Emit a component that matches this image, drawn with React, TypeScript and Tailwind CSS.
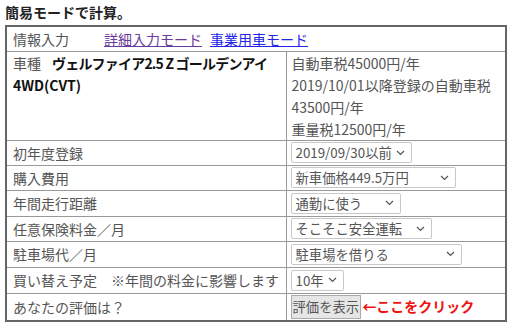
import React from 'react';

// select look-alike: native <select> draws differently in every browser
function FakeSelect({ label, width }: { label: string; width: string }) {
  return (
    <div
      className={`${width} h-[21px] flex items-center justify-between border border-[#c8c8c8] rounded-[2px] bg-white pl-1 pr-1.5 text-[13.33px] text-[#555]`}
    >
      <span className="whitespace-nowrap leading-[19px]">{label}</span>
      <svg width="9" height="6" viewBox="0 0 9 6" className="ml-1 shrink-0">
        <path d="M1 1l3.5 3.5L8 1" fill="none" stroke="#555" strokeWidth="1.2" />
      </svg>
    </div>
  );
}

const rows = [
  { label: '初年度登録', value: '2019/09/30以前', width: 'min-w-[114px]', h: 'h-[25px]' },
  { label: '購入費用', value: '新車価格449.5万円', width: 'min-w-[165px]', h: 'h-[25px]' },
  { label: '年間走行距離', value: '通勤に使う', width: 'min-w-[110px]', h: 'h-[26px]' },
  { label: '任意保険料金／月', value: 'そこそこ安全運転', width: 'min-w-[141px]', h: 'h-[25px]' },
  { label: '駐車場代／月', value: '駐車場を借りる', width: 'min-w-[171px]', h: 'h-[26px]' },
  { label: '買い替え予定　※年間の料金に影響します', value: '10年', width: 'min-w-[49px]', h: 'h-[26px]' },
];

export default function App() {
  return (
    <div
      className="w-[512px] h-[324px] bg-white text-[14px] text-[#555] overflow-hidden"
      style={{ fontFamily: '"Noto Sans CJK JP", "Noto Sans", sans-serif' }}
    >
      <h1 className="h-[25px] pl-[5px] leading-[25px] font-bold text-[14px] text-[#222]">簡易モードで計算。</h1>

      <table className="ml-[5px] w-[502px] border-collapse border-2 border-[#666]">
        <tbody>
          <tr className="h-[25px]">
            <td colSpan={2} className="border border-[#999] px-[6px] leading-[22px]">
              <span>情報入力</span>
              <a href="#" className="ml-[35px] underline text-[#6a3b9c]">詳細入力モード</a>
              <a href="#" className="ml-[8px] underline text-[#2323e8]">事業用車モード</a>
            </td>
          </tr>

          <tr className="h-[88px]">
            <td className="w-[280px] border border-[#999] px-[6px] align-top leading-[22px] whitespace-nowrap">
              <span>車種</span>
              <span className="ml-[11px] font-bold text-[#111] tracking-[-0.8px]">
                ヴェルファイア2.5 Z ゴールデンアイ
              </span>
              <br />
              <span className="font-bold text-[#111]">4WD(CVT)</span>
            </td>
            <td className="border border-[#999] pl-[5px] align-top leading-[22px] whitespace-nowrap">
              自動車税45000円/年
              <br />
              2019/10/01以降登録の自動車税
              <br />
              43500円/年
              <br />
              重量税12500円/年
            </td>
          </tr>

          {rows.map((r) => (
            <tr key={r.label} className={r.h}>
              <td className="border border-[#999] px-[6px] py-0 leading-[22px] whitespace-nowrap">{r.label}</td>
              <td className="border border-[#999] pl-[4px] py-0">
                <div className="flex">
                  <FakeSelect label={r.value} width={r.width} />
                </div>
              </td>
            </tr>
          ))}

          <tr className="h-[28px]">
            <td className="border border-[#999] px-[6px] leading-[22px]">あなたの評価は？</td>
            <td className="border border-[#999] pl-[4px] py-0">
              <div className="flex items-center">
                <button className="h-[24px] px-[1px] border border-[#aaa] bg-[#e6e6e6] text-[13.33px] text-[#555] leading-[20px]">
                  評価を表示
                </button>
                <span className="ml-[1px] font-bold text-[#f01010] whitespace-nowrap">←ここをクリック</span>
              </div>
            </td>
          </tr>
        </tbody>
      </table>
    </div>
  );
}
